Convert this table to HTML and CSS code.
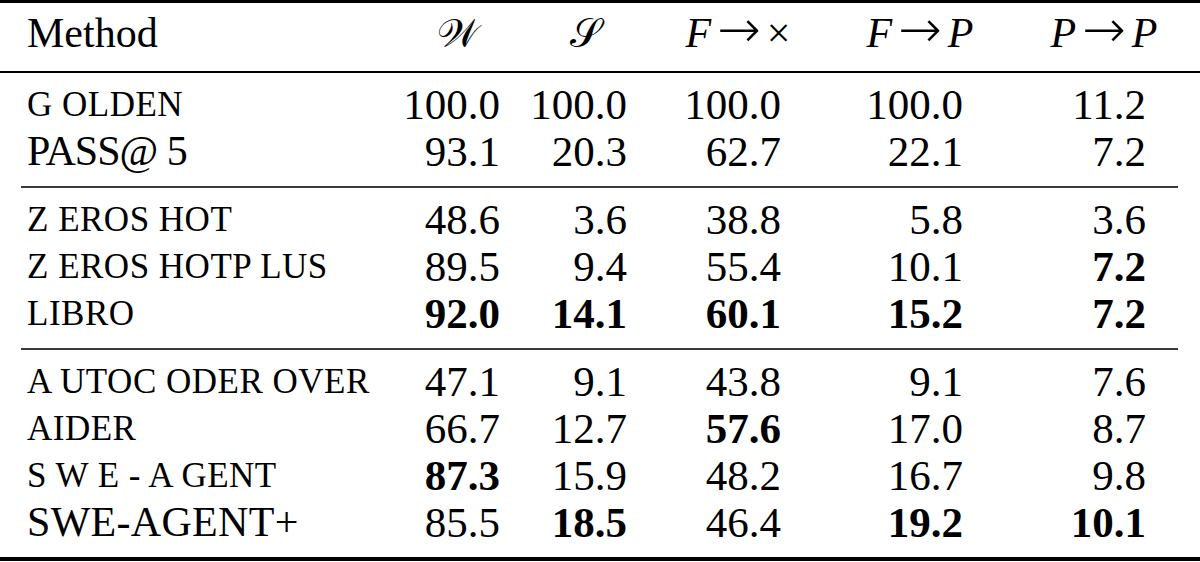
FILE: index.html
```html
<!DOCTYPE html>
<html lang="en">
<head>
  <meta charset="UTF-8">
  <title>Results</title>
  <link rel="stylesheet" href="styles.css">
</head>
<body>
  <div class="results">
    <div class="thead">
      <div class="row">
        <div class="cell name">Method</div>
        <div class="cell hd"><span class="cal">𝒲</span></div>
        <div class="cell hd"><span class="cal">𝒮</span></div>
        <div class="cell hd"><i>F</i><span class="arr">→</span>×</div>
        <div class="cell hd"><i>F</i><span class="arr">→</span><i>P</i></div>
        <div class="cell hd"><i>P</i><span class="arr">→</span><i>P</i></div>
      </div>
    </div>

    <div class="group">
      <div class="row">
        <div class="cell name sc">G OLDEN</div>
        <div class="cell">100.0</div><div class="cell">100.0</div><div class="cell">100.0</div><div class="cell">100.0</div><div class="cell">11.2</div>
      </div>
      <div class="row">
        <div class="cell name big">PASS@ 5</div>
        <div class="cell">93.1</div><div class="cell">20.3</div><div class="cell">62.7</div><div class="cell">22.1</div><div class="cell">7.2</div>
      </div>
    </div>
    <div class="rule"></div>

    <div class="group">
      <div class="row">
        <div class="cell name sc">Z EROS HOT</div>
        <div class="cell">48.6</div><div class="cell">3.6</div><div class="cell">38.8</div><div class="cell">5.8</div><div class="cell">3.6</div>
      </div>
      <div class="row">
        <div class="cell name sc">Z EROS HOTP LUS</div>
        <div class="cell">89.5</div><div class="cell">9.4</div><div class="cell">55.4</div><div class="cell">10.1</div><div class="cell"><b>7.2</b></div>
      </div>
      <div class="row">
        <div class="cell name sc">LIBRO</div>
        <div class="cell"><b>92.0</b></div><div class="cell"><b>14.1</b></div><div class="cell"><b>60.1</b></div><div class="cell"><b>15.2</b></div><div class="cell"><b>7.2</b></div>
      </div>
    </div>
    <div class="rule"></div>

    <div class="group">
      <div class="row">
        <div class="cell name sc">A UTOC ODER OVER</div>
        <div class="cell">47.1</div><div class="cell">9.1</div><div class="cell">43.8</div><div class="cell">9.1</div><div class="cell">7.6</div>
      </div>
      <div class="row">
        <div class="cell name sc">AIDER</div>
        <div class="cell">66.7</div><div class="cell">12.7</div><div class="cell"><b>57.6</b></div><div class="cell">17.0</div><div class="cell">8.7</div>
      </div>
      <div class="row">
        <div class="cell name sc">S W E - A GENT</div>
        <div class="cell"><b>87.3</b></div><div class="cell">15.9</div><div class="cell">48.2</div><div class="cell">16.7</div><div class="cell">9.8</div>
      </div>
      <div class="row">
        <div class="cell name big wide">SWE-AGENT+</div>
        <div class="cell">85.5</div><div class="cell"><b>18.5</b></div><div class="cell">46.4</div><div class="cell"><b>19.2</b></div><div class="cell"><b>10.1</b></div>
      </div>
    </div>
  </div>
</body>
</html>
```

FILE: styles.css
```css
* {
  box-sizing: border-box;
}

html, body {
  margin: 0;
  padding: 0;
  background: #fff;
  color: #000;
  font-family: 'Liberation Serif', serif;
}

.results {
  width: 1200px;
  border-top: 3px solid #000;
  border-bottom: 4px solid #000;
}

.thead {
  padding: 7px 0 14px;
  border-bottom: 2px solid #000;
}

.group {
  padding: 8px 0 11px;
}

.rule {
  height: 2px;
  margin: 0 22px 0 21px;
  background: #3a3a3a;
}

.row {
  display: grid;
  grid-template-columns: 390px 136px 118px 188px 176px 192px;
  height: 47px;
  font-size: 43px;
  line-height: 47px;
}

.cell {
  text-align: right;
  white-space: nowrap;
}

.cell:nth-child(2) { padding-right: 26px; }
.cell:nth-child(3) { padding-right: 17px; }
.cell:nth-child(4) { padding-right: 51px; }
.cell:nth-child(5) { padding-right: 45px; }
.cell:nth-child(6) { padding-right: 54px; }

.cell.name {
  text-align: left;
  padding-left: 27px;
  font-size: 42px;
}

.cell.hd {
  text-align: center;
  padding-right: 0;
  font-size: 42px;
}

.name.sc {
  font-size: 35px;
  letter-spacing: 0.5px;
}

.name.big {
  font-size: 42px;
  letter-spacing: -1px;
}

.name.wide {
  letter-spacing: 0.3px;
}

.cal {
  font-family: 'DejaVu Serif', 'DejaVu Sans', serif;
  font-size: 40px;
}

.arr {
  font-family: 'DejaVu Sans', sans-serif;
  font-weight: 200;
  font-size: 52px;
  line-height: 0;
  margin: 0 6px;
}

b {
  font-weight: bold;
}
```
